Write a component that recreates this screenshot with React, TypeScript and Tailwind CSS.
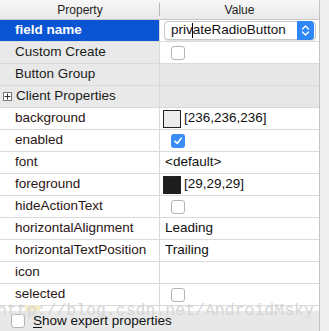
import React from 'react';

type Row = {
  name: string;
  kind: 'combo' | 'check' | 'checked' | 'group' | 'plus' | 'color' | 'text' | 'empty';
  value?: string;
  swatch?: string;
  bold?: boolean;
};

const rows: Row[] = [
  { name: 'field name', kind: 'combo', value: 'privateRadioButton', bold: true },
  { name: 'Custom Create', kind: 'check' },
  { name: 'Button Group', kind: 'group' },
  { name: 'Client Properties', kind: 'plus' },
  { name: 'background', kind: 'color', value: '[236,236,236]', swatch: 'bg-[#ececec]' },
  { name: 'enabled', kind: 'checked' },
  { name: 'font', kind: 'text', value: '<default>' },
  { name: 'foreground', kind: 'color', value: '[29,29,29]', swatch: 'bg-[#1d1d1d]' },
  { name: 'hideActionText', kind: 'check' },
  { name: 'horizontalAlignment', kind: 'text', value: 'Leading' },
  { name: 'horizontalTextPosition', kind: 'text', value: 'Trailing' },
  { name: 'icon', kind: 'empty' },
  { name: 'selected', kind: 'check' },
];

const Box = ({ checked }: { checked?: boolean }) =>
  checked ? (
    <div className="w-[14px] h-[14px] rounded-[3px] bg-[#3a8df6] flex items-center justify-center">
      <svg width="10" height="10" viewBox="0 0 10 10">
        <path d="M2 5.2 L4.2 7.5 L8.2 2.2" fill="none" stroke="white" strokeWidth="1.6" strokeLinecap="round" strokeLinejoin="round" />
      </svg>
    </div>
  ) : (
    <div className="w-[14px] h-[14px] rounded-[3px] bg-white border border-[#b4b4b4]" />
  );

const ValueCell = ({ row }: { row: Row }) => {
  switch (row.kind) {
    case 'combo':
      return (
        <div className="flex-1 h-full pl-[4px] pr-[3px] pt-[1px] bg-white">
          <div className="relative h-[19px] rounded-[4px] border border-[#c6c6c6] bg-white flex items-center pl-[6px] shadow-[0_1px_0_#e2e2e2]">
            <span className="text-[13.5px] text-[#111]">
              priv<span className="inline-block w-px h-[15px] bg-black align-middle -mx-[0.5px]" />ateRadioButton
            </span>
            <div className="absolute right-[1px] top-[-1px] w-[17px] h-[19px] rounded-r-[4px] bg-[#2f86f6] flex items-center justify-center">
              <svg width="9" height="13" viewBox="0 0 9 13">
                <path d="M1.5 5 L4.5 2 L7.5 5 M1.5 8 L4.5 11 L7.5 8" fill="none" stroke="white" strokeWidth="1.4" strokeLinecap="round" strokeLinejoin="round" />
              </svg>
            </div>
          </div>
        </div>
      );
    case 'check':
    case 'checked':
      return (
        <div className="flex-1 h-full flex items-center pl-[11px] bg-white">
          <Box checked={row.kind === 'checked'} />
        </div>
      );
    case 'group':
    case 'plus':
      return <div className="flex-1 h-full bg-[#e7e7e7]" />;
    case 'color':
      return (
        <div className="flex-1 h-full flex items-center pl-[3px] bg-white">
          <div className={`w-[18px] h-[18px] border border-[#222] ${row.swatch}`} />
          <span className="ml-[3px] text-[13.5px] text-[#111]">{row.value}</span>
        </div>
      );
    case 'text':
      return (
        <div className="flex-1 h-full flex items-center pl-[5px] bg-white">
          <span className="text-[13.5px] text-[#111]">{row.value}</span>
        </div>
      );
    default:
      return <div className="flex-1 h-full bg-white" />;
  }
};

export default function App() {
  return (
    <div className="relative w-[329px] h-[331px] flex bg-white overflow-hidden" style={{ fontFamily: '"Liberation Sans", Arial, sans-serif' }}>
      <div className="w-[320px] h-full flex flex-col border-r border-[#c4c4c4]">
        {/* header */}
        <div className="h-[20px] flex bg-gradient-to-b from-[#f7f7f7] to-[#e9e9e9] border-b border-[#c9c9c9] text-[12px] text-[#222]">
          <div className="w-[160px] flex items-center justify-center relative">
            Property
            <div className="absolute right-0 top-[3px] h-[13px] w-px bg-[#b9b9b9]" />
          </div>
          <div className="flex-1 flex items-center justify-center">Value</div>
        </div>

        {/* rows */}
        <div className="flex-1 flex flex-col overflow-hidden">
          {rows.map((row) => {
            const grayLeft = row.name === 'Custom Create' || row.kind === 'group' || row.kind === 'plus';
            return (
              <div key={row.name} className="h-[22px] shrink-0 flex border-b border-[#dadada]">
                <div
                  className={`w-[160px] h-full flex items-center border-r border-[#dadada] text-[13.5px] whitespace-nowrap ${
                    row.bold ? 'bg-[#0b55d5] text-white font-bold' : grayLeft ? 'bg-[#e9e9e9] text-[#1b1b1b]' : 'bg-white text-[#2a1515]'
                  } ${row.kind === 'plus' ? 'pl-[3px]' : 'pl-[15px]'}`}
                >
                  {row.kind === 'plus' && (
                    <div className="w-[9px] h-[9px] border border-[#777] flex items-center justify-center mr-[4px] bg-white">
                      <svg width="7" height="7" viewBox="0 0 7 7">
                        <path d="M0.5 3.5 H6.5 M3.5 0.5 V6.5" stroke="#333" strokeWidth="1" />
                      </svg>
                    </div>
                  )}
                  {row.name}
                </div>
                <ValueCell row={row} />
              </div>
            );
          })}
          <div className="flex-1 flex">
            <div className="w-[160px] border-r border-[#dadada]" />
            <div className="flex-1" />
          </div>
        </div>

        {/* bottom bar */}
        <div className="h-[20px] shrink-0 flex items-center bg-[#e8e8e8] pl-[11px] gap-[8px] text-[13.5px] text-[#111]">
          <Box />
          <span>
            <span className="underline underline-offset-2">S</span>how expert properties
          </span>
        </div>
      </div>
      <div className="flex-1 bg-[#efefef]" />

      {/* watermark */}
      <div className="absolute left-[25px] top-[305px] w-[15px] h-[6px] bg-[#f6ecc6]" />
      <div
        className="absolute left-[-3px] top-[301px] text-[16.5px] leading-[20px] text-[#d6d6d6] whitespace-nowrap pointer-events-none"
        style={{ fontFamily: '"Liberation Mono", "Courier New", monospace' }}
      >
        http://blog.csdn.net/AndroidMsky
      </div>
    </div>
  );
}
